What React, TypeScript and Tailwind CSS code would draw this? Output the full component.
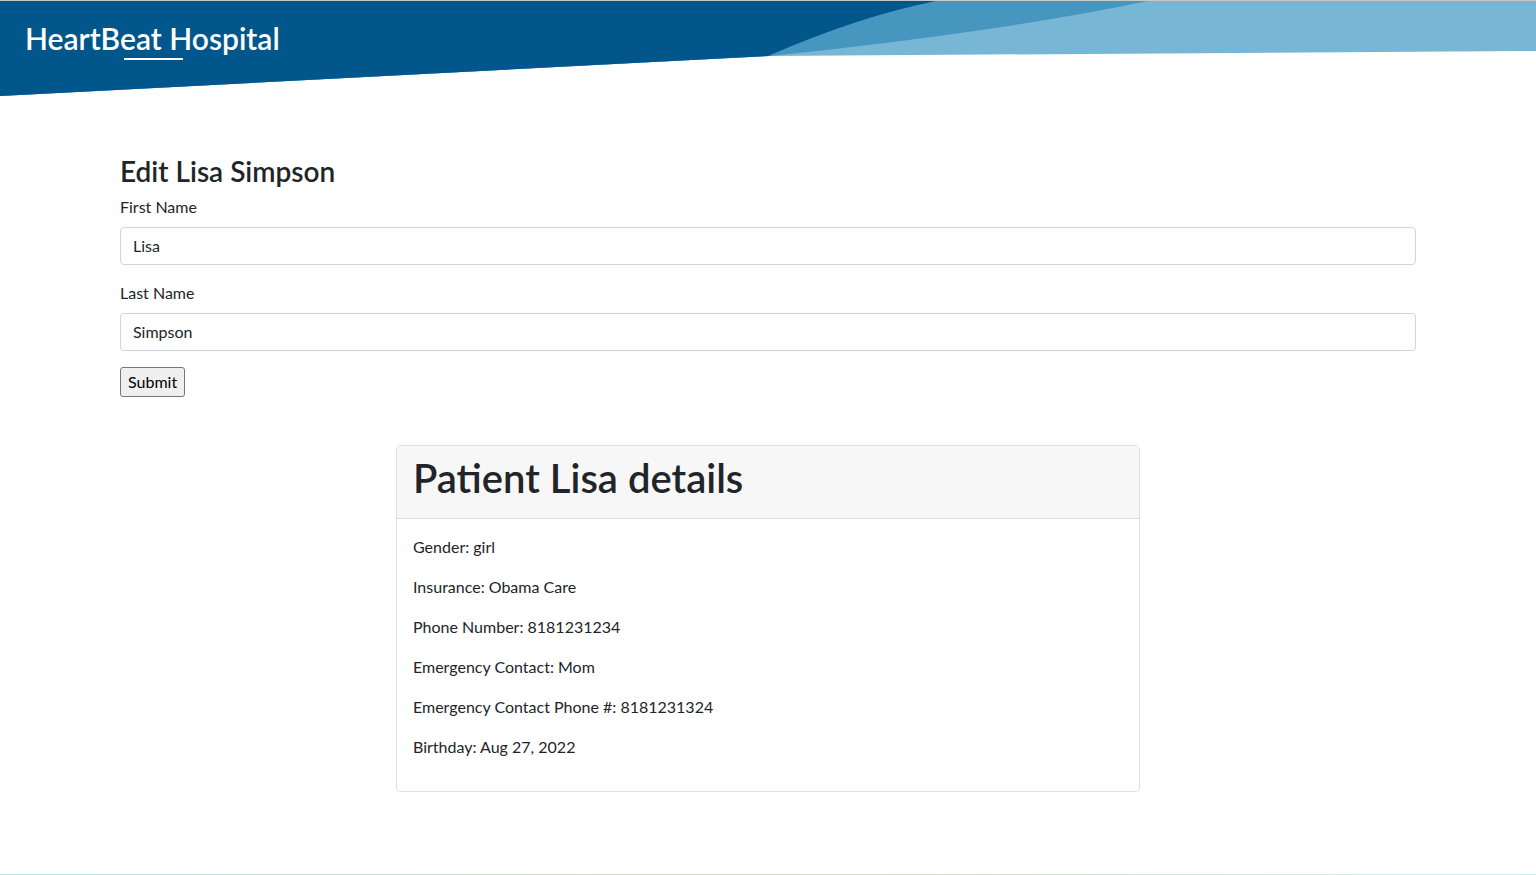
import React from 'react';

const details = [
  'Gender: girl',
  'Insurance: Obama Care',
  'Phone Number: 8181231234',
  'Emergency Contact: Mom',
  'Emergency Contact Phone #: 8181231324',
  'Birthday: Aug 27, 2022',
];

const Header: React.FC = () => (
  <header className="relative h-[96px] w-full">
    <svg
      className="absolute inset-0 h-full w-full"
      viewBox="0 0 1536 96"
      preserveAspectRatio="none"
    >
      <rect x="0" y="0" width="1536" height="1" fill="#c8c8c8" />
      <path d="M0,1 H1536 V51 L768,56 L0,96 Z" fill="#78b6d6" />
      <path d="M0,1 H1148 Q1000,32 770,56 L0,96 Z" fill="#4796c0" />
      <path d="M0,1 H936 Q860,16 768,56 L0,96 Z" fill="#01568c" />
    </svg>
    <div className="relative pl-[25px] pt-[18px]">
      <span className="relative text-[30px] font-semibold leading-[40px] text-white">
        HeartBeat Hospital
        <span className="absolute left-[99px] top-[38px] h-[2px] w-[59px] bg-white" />
      </span>
    </div>
  </header>
);

export default function App() {
  return (
    <div className="flex min-h-[875px] flex-col bg-white font-['Lato','Segoe_UI',sans-serif] text-[#212529]">
      <Header />
      <main className="flex-1">
        <div className="mx-auto w-[1296px] pt-[59px]">
          <h3 className="mb-[6px] text-[28px] font-semibold leading-[1.2]">Edit Lisa Simpson</h3>
          <form>
            <div className="mb-4">
              <label className="mb-2 block text-base leading-6">First Name</label>
              <input
                defaultValue="Lisa"
                className="block h-[38px] w-full rounded border border-[#ced4da] px-3 text-base text-[#212529] outline-none"
              />
            </div>
            <div className="mb-4">
              <label className="mb-2 block text-base leading-6">Last Name</label>
              <input
                defaultValue="Simpson"
                className="block h-[38px] w-full rounded border border-[#ced4da] px-3 text-base text-[#212529] outline-none"
              />
            </div>
            <button
              type="button"
              className="h-[30px] rounded-[3px] border border-[#767676] bg-[#efefef] px-[7px] text-base leading-none text-black"
            >
              Submit
            </button>
          </form>
        </div>

        <div className="mx-auto mt-[48px] w-[744px] rounded border border-[#dfdfdf]">
          <div className="border-b border-[#dfdfdf] bg-[#f7f7f7] px-4 pb-2 pt-2">
            <h1 className="mb-2 text-[40px] font-semibold leading-[48px]">Patient Lisa details</h1>
          </div>
          <div className="p-4">
            {details.map((d) => (
              <p key={d} className="mb-4 text-base leading-6">
                {d}
              </p>
            ))}
          </div>
        </div>
      </main>
      <div className="h-px w-full bg-gradient-to-r from-[#b3e4e4] via-[#dcd8c0] to-[#c8f2f2]" />
    </div>
  );
}
